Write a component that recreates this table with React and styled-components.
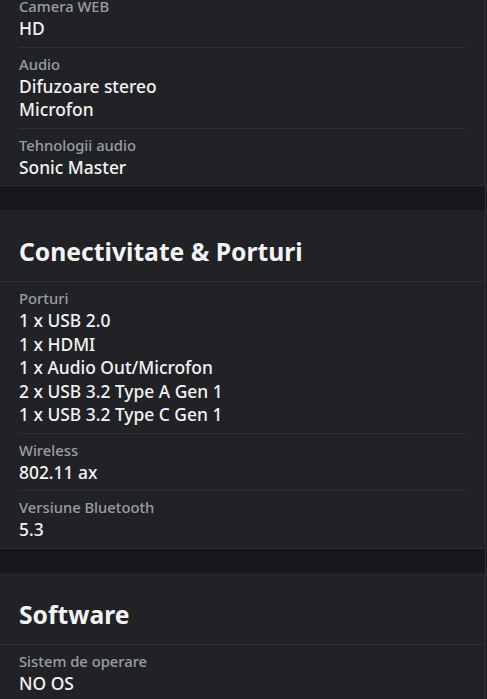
import React from "react";
import styled, { createGlobalStyle } from "styled-components";

const Global = createGlobalStyle`
  html, body { margin: 0; padding: 0; background: #16171a; }
  body { font-family: "Noto Sans", "Open Sans", sans-serif; -webkit-font-smoothing: antialiased; }
  #root { overflow: hidden; height: 699px; }
`;

const Page = styled.div`
  display: flex;
  flex-direction: column;
  gap: 24px;
  margin-top: -10px;
  border-right: 1px solid #2e3135;
  width: 486px;
  box-sizing: border-box;
`;

const Card = styled.section`
  background: #202225;
  border-bottom: 1px solid #2b2e32;
  display: flex;
  flex-direction: column;
`;

const Heading = styled.h2`
  margin: 0;
  padding: 26px 19px 13px;
  font-size: 24.7px;
  line-height: 32px;
  font-weight: 700;
  color: #f4f4f4;
  border-bottom: 1px solid #2d3034;
`;

const Row = styled.div`
  margin: 0 19px;
  padding: 6px 0;
  display: flex;
  flex-direction: column;
  gap: 1px;
  border-bottom: ${(p) => (p.$last ? "none" : "1px solid #2d3034")};
`;

const Label = styled.div`
  font-size: 14.75px;
  line-height: 20px;
  color: #9a9ea3;
  font-weight: 500;
`;

const Values = styled.div`
  display: flex;
  flex-direction: column;
`;

const Value = styled.div`
  font-size: 17.4px;
  line-height: 23.5px;
  color: #f3f3f3;
  font-weight: 500;
`;

const sections = [
  {
    title: null,
    rows: [
      { label: "Camera WEB", values: ["HD"] },
      { label: "Audio", values: ["Difuzoare stereo", "Microfon"] },
      { label: "Tehnologii audio", values: ["Sonic Master"] },
    ],
  },
  {
    title: "Conectivitate & Porturi",
    rows: [
      {
        label: "Porturi",
        values: [
          "1 x USB 2.0",
          "1 x HDMI",
          "1 x Audio Out/Microfon",
          "2 x USB 3.2 Type A Gen 1",
          "1 x USB 3.2 Type C Gen 1",
        ],
      },
      { label: "Wireless", values: ["802.11 ax"] },
      { label: "Versiune Bluetooth", values: ["5.3"] },
    ],
  },
  {
    title: "Software",
    rows: [{ label: "Sistem de operare", values: ["NO OS"] }],
  },
];

export default function App() {
  return (
    <>
      <Global />
      <Page>
        {sections.map((s, i) => (
          <Card key={i}>
            {s.title && <Heading>{s.title}</Heading>}
            {s.rows.map((r, j) => (
              <Row key={j} $last={j === s.rows.length - 1}>
                <Label>{r.label}</Label>
                <Values>
                  {r.values.map((v) => (
                    <Value key={v}>{v}</Value>
                  ))}
                </Values>
              </Row>
            ))}
          </Card>
        ))}
      </Page>
    </>
  );
}
